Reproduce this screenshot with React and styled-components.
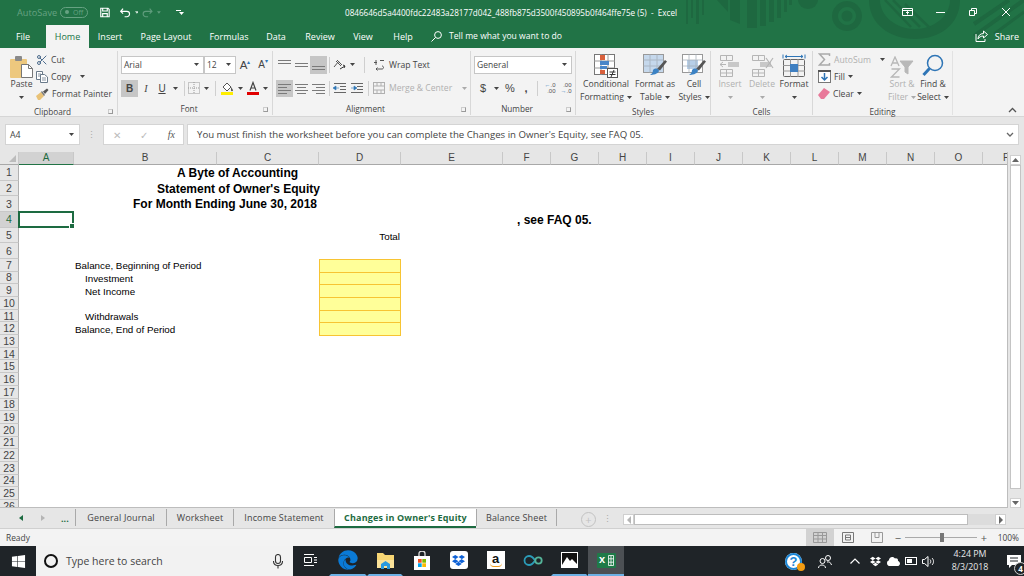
import React from "react";
import styled, { createGlobalStyle } from "styled-components";
import { FaWindows, FaEdge, FaDropbox, FaCloud } from "react-icons/fa";
import { Scissors } from "lucide-react";

const GlobalStyle = createGlobalStyle`
  html, body { margin: 0; padding: 0; background: #fff; }
  body { font-family: "Open Sans", "Noto Sans", sans-serif; }
`;

const GREEN = "#217346";
const COLUMNS = ["A", "B", "C", "D", "E", "F", "G", "H", "I", "J", "K", "L", "M", "N", "O", "P"];
const ROW_COUNT = 26;
const RIBBON_TABS = [
  ["Insert", 42],
  ["Page Layout", 70],
  ["Formulas", 56],
  ["Data", 38],
  ["Review", 50],
  ["View", 36],
  ["Help", 44],
];
const SHEETS = [
  ["General Journal", 91],
  ["Worksheet", 67],
  ["Income Statement", 101],
  ["Changes in Owner's Equity", 142, true],
  ["Balance Sheet", 81],
];

/* ---------- small drawn icons ---------- */

const Caret = ({ color = "#444" }) => (
  <svg width="5" height="3" viewBox="0 0 5 3"><path d="M0 0h5L2.500 3z" fill={color} /></svg>
);

const Lines = ({ kind }) => {
  const rows = {
    top: [[1, 3, 13], [1, 6, 13]],
    middle: [[1, 6, 13], [1, 9, 13]],
    bottom: [[1, 9, 13], [1, 12, 13]],
    left: [[1, 3, 13], [1, 6, 9], [1, 9, 13], [1, 12, 9]],
    center: [[1, 3, 13], [3, 6, 9], [1, 9, 13], [3, 12, 9]],
    right: [[1, 3, 13], [5, 6, 9], [1, 9, 13], [5, 12, 9]],
  }[kind];
  return (
    <svg width="15" height="15" viewBox="0 0 15 15">
      {rows.map(([x, y, w]) => <rect key={y} x={x} y={y} width={w} height="1" fill="#7a7a7a" />)}
    </svg>
  );
};

const Indent = ({ flip }) => (
  <svg width="14" height="12" viewBox="0 0 14 12">
    <g fill="#666">
      <rect x="1" y="1" width="12" height="1" />
      <rect x="7" y="4" width="6" height="1" />
      <rect x="7" y="7" width="6" height="1" />
      <rect x="1" y="10" width="12" height="1" />
    </g>
    <path d={flip ? "M1 6h3V4l3 2-3 2V6" : "M6 6H3V4L0 6l3 2V6"} fill="#2e75b6" stroke="#2e75b6" strokeWidth=".6" />
  </svg>
);

const PasteIcon = () => (
  <svg width="23" height="22" viewBox="0 0 23 22">
    <rect x="0" y="3" width="17" height="19" rx="1" fill="#edc87e" />
    <rect x="5" y="0" width="7" height="5" rx="1" fill="#8a8a8a" />
    <path d="M11.500 8.500h7l4 4v9h-11z" fill="#fff" stroke="#777" />
    <path d="M18.500 8.500v4h4" fill="none" stroke="#777" />
  </svg>
);

const CopyIcon = () => (
  <svg width="12" height="12" viewBox="0 0 12 12" fill="#fff" stroke="#6a7a8a">
    <path d="M.5.5h6v8h-6z" />
    <path d="M4.500 3.500h4l3 2.500v5.500h-7z" />
    <path d="M2 3h3M2 5h2M6 7h4M6 9h4" strokeWidth=".8" />
  </svg>
);

const BrushIcon = () => (
  <svg width="13" height="12" viewBox="0 0 13 12">
    <path d="M0 8l5-4 3 4-4 4H2z" fill="#e9c277" />
    <path d="M5 4l3 4 1-1-3-4z" fill="#777" />
    <path d="M7 3.500l4-3 1.500 1.500-3.500 4z" fill="#555" />
  </svg>
);

const BorderIcon = () => (
  <svg width="12" height="12" viewBox="0 0 12 12" fill="none" stroke="#999" strokeDasharray="1 1">
    <rect x=".5" y=".5" width="11" height="11" />
    <path d="M6 0v12M0 6h12" />
  </svg>
);

const FillIcon = () => (
  <svg width="13" height="14" viewBox="0 0 13 14">
    <path d="M2 6l4-4 4 4-4 4z" fill="#fff" stroke="#555" />
    <path d="M10 6c1 1.500 2 2.500 2 3.300a1 1 0 0 1-2 0z" fill="#555" />
    <rect x="0" y="11" width="12" height="3" fill="#ffee00" />
  </svg>
);

const FontColorIcon = () => (
  <svg width="13" height="14" viewBox="0 0 13 14">
    <rect x="0" y="11" width="12" height="3" fill="#e00000" />
    <path d="M3 9.500L6 1.500l3 8M4 7h4" fill="none" stroke="#444" strokeWidth="1.200" />
  </svg>
);

const OrientIcon = () => (
  <svg width="13" height="12" viewBox="0 0 13 12" fill="none" stroke="#555">
    <path d="M1 8l5-6M3 2l5 5M4 1l5 5" />
    <path d="M7 10l5-3M10 6l2 1-1 2" stroke="#333" />
  </svg>
);

const WrapIcon = () => (
  <svg width="12" height="12" viewBox="0 0 12 12" fill="none" stroke="#555">
    <path d="M3 1v5M1 3.500h3M7 1.500h4M9 7c2 0 2 3 0 3H3M4.500 8.500L3 10l1.500 1.500" />
  </svg>
);

const MergeIcon = () => (
  <svg width="12" height="12" viewBox="0 0 12 12" fill="none" stroke="#b0b0b0">
    <rect x=".5" y=".5" width="11" height="11" />
    <path d="M0 4h12M0 8h12M4 0v4M8 0v4M4 8v4M8 8v4" />
  </svg>
);

const CondFormatIcon = () => (
  <svg width="24" height="24" viewBox="0 0 24 24">
    <rect x=".5" y=".5" width="20" height="20" fill="#fff" stroke="#777" />
    <path d="M7 0v21M14 0v21M0 7h21M0 14h21" stroke="#999" />
    <rect x="6" y="1" width="5" height="5" fill="#d9603c" />
    <rect x="6" y="7" width="9" height="4" fill="#4a86c8" />
    <rect x="6" y="12" width="7" height="3" fill="#4a86c8" />
    <rect x="6" y="16" width="5" height="4" fill="#d9603c" />
    <rect x="13.500" y="14.500" width="10" height="9" fill="#fff" stroke="#555" />
    <path d="M15.500 18h6M15.500 20.500h6M20 16l-3 7" stroke="#333" fill="none" />
  </svg>
);

const TableStyleIcon = ({ cell }) => (
  <svg width="24" height="24" viewBox="0 0 24 24">
    <rect x=".5" y=".5" width="20" height="18" fill="#fff" stroke="#999" />
    {cell ? (
      <rect x="5" y="6" width="11" height="9" fill="#b7cfe8" />
    ) : (
      <rect x="1" y="1" width="19" height="17" fill="#c5d8ec" />
    )}
    <path d="M7 0v19M14 0v19M0 6h21M0 12h21" stroke="#a0aab4" opacity=".7" />
    <path d="M14 15l8-9 2 1.500-7 9z" fill="#555" />
    <path d="M10 16c3-3 6-1 6 1-1 3-6 4-9 4 2-1 3-3 3-5z" fill="#3b82c4" />
  </svg>
);

const CellsIcon = ({ kind }) => {
  const stroke = kind === "format" ? "#666" : "#b5b5b5";
  return (
    <svg width="24" height="24" viewBox="0 0 24 24" fill="none">
      {kind === "format" ? (
        <>
          <rect x="1.500" y="5.500" width="21" height="17" rx="1" stroke={stroke} />
          <path d="M8.500 5v18M16 5v18M1 11.500h22M1 17h22" stroke="#999" />
          <rect x="8" y="10" width="8" height="8" fill="#3f7fc1" />
          <path d="M1 .5v4M23 .5v4M3 2.500h18M3 2.500l2-1.500M3 2.500l2 1.500M21 2.500l-2-1.500M21 2.500l-2 1.500" stroke="#2e75b6" />
        </>
      ) : (
        <>
          <path d="M2.500 1.500h12v5h-12zM2.500 15.500h12v7h-12zM8.500 1.500v5M8.500 15.500v7M2.500 19h12" stroke={stroke} />
          <rect x="10" y="8" width="11" height="5" fill="#c8c8c8" />
          {kind === "insert" ? (
            <path d="M8 10.500H2M5 8l-3 2.500L5 13" stroke={stroke} />
          ) : (
            <path d="M16 4l7 10M23 4l-7 10" stroke={stroke} strokeWidth="1.200" />
          )}
        </>
      )}
    </svg>
  );
};

const SumIcon = () => (
  <svg width="13" height="13" viewBox="0 0 13 13"><path d="M11.500 3V1H1.500l5 5.500-5 5.500h10v-2" fill="none" stroke="#aaa" strokeWidth="1.500" /></svg>
);

const FillDownIcon = () => (
  <svg width="13" height="13" viewBox="0 0 13 13">
    <rect x=".5" y=".5" width="12" height="12" fill="#fff" stroke="#777" />
    <rect x="0" y="0" width="13" height="2" fill="#555" />
    <path d="M6.500 3v7M3.500 7l3 3 3-3" fill="none" stroke="#2e75b6" strokeWidth="1.500" />
  </svg>
);

const EraserIcon = () => (
  <svg width="12" height="11" viewBox="0 0 12 11"><path d="M0 7l6-7 6 4-6 7H3z" fill="#e8799a" /></svg>
);

const SortIcon = () => (
  <svg width="24" height="22" viewBox="0 0 24 22" fill="none" stroke="#b8b8b8">
    <path d="M1 10L5 1l4 9M2.500 7h5M1.500 13h8l-8 8h8" strokeWidth="1.300" />
    <path d="M10 5h13l-5 6v7l-3-2v-5z" fill="#b8b8b8" />
  </svg>
);

const FindIcon = () => (
  <svg width="22" height="24" viewBox="0 0 22 24" fill="none" stroke="#2e75b6">
    <circle cx="13" cy="9" r="7.500" strokeWidth="1.500" />
    <path d="M7.500 14.500L1.500 21" strokeWidth="3" />
  </svg>
);

const WindowIcon = ({ kind }) => (
  <svg width="12" height="12" viewBox="0 0 12 12" fill="none" stroke="#fff">
    {kind === "min" && <path d="M1 6.500h9" />}
    {kind === "restore" && <path d="M2.500 4.500h5v5h-5zM4.500 4V2.500h5v5H8" />}
    {kind === "close" && <path d="M2 2l8 8M10 2l-8 8" />}
    {kind === "ribbon" && <path d="M.5 2.500h10v7H.5zM.5 4.500h10M5.500 8.500V5.500M4 7l1.500-1.500L7 7" />}
  </svg>
);

const TitlePattern = () => (
  <PatternSvg viewBox="0 0 1024 48" fill="none">
    <g fill="#1e6840">
      <path d="M686 0h2v24h-2zM691 0h2v18h-2zM696 0h3v24h-3zM702 0h2v15h-2z" />
      <path d="M717 0h11v12z" />
      <path d="M730 0h10v24l-10-4zM747 0h10v28h-10zM760 0h6v26h-6zM769 0h5v22h-5zM777 0h4v18h-4zM784 0h3v12h-3zM789 0h3v5h-3z" />
      <path d="M798 0h20a10 9 0 0 1-20 0z" />
      <path fillRule="evenodd" d="M847 1a15 15 0 1 0 .01 0zM847 7a9 9 0 1 1-.01 0z" />
      <circle cx="847" cy="16" r="5.500" />
      <path fillRule="evenodd" d="M869 0c0 24 21 39 46 39s45-15 45-39h-10c0 16-16 29-35 29s-35-13-35-29z" />
    </g>
    <g stroke="#1e6840" strokeWidth="2.500">
      <path d="M885 0l26 27M893 0l27 27M905 4l25 24" />
      <path d="M1024 0l-50 36M1009 0l-35 24" strokeWidth="4" />
      <path d="M1024 12l-30 22" strokeWidth="3" />
    </g>
  </PatternSvg>
);

/* ---------- app ---------- */

function SmallTool({ w, on, children }) {
  return <Tool $w={w} $on={on}>{children}</Tool>;
}

function Large({ w, icon, lines, dim, caret }) {
  return (
    <LargeButton $w={w} $dim={dim}>
      <LargeIcon>{icon}</LargeIcon>
      <span>{lines[0]}</span>
      <span>
        {lines[1]} {caret && <Caret color={dim ? "#aaa" : "#444"} />}
      </span>
    </LargeButton>
  );
}

function App() {
  const rows = Array.from({ length: ROW_COUNT }, (_, i) => i + 1);
  return (
    <Page>
      <GlobalStyle />
      <Header>
        <TitlePattern />
        <TitleBar>
          <AutoSave>AutoSave</AutoSave>
          <Toggle><i /> Off</Toggle>
          <QuickAccess>
            <svg width="13" height="13" viewBox="0 0 13 13" fill="none" stroke="#fff" strokeWidth="1.500">
              <path d="M1 1h9.500L12 2.500V12H1zM3.500 1v3.500h6V1M3.500 12V8h6v4" />
            </svg>
            <svg width="14" height="13" viewBox="0 0 14 13" fill="none" stroke="#fff" strokeWidth="1.500">
              <path d="M1 5h8a3.500 3.500 0 0 1 0 7H6M4 1.500L1 5l3 3" />
            </svg>
            <Caret color="#cfe3d8" />
            <svg width="14" height="13" viewBox="0 0 14 13" fill="none" stroke="#5f9c7c" strokeWidth="1.500">
              <path d="M13 5H5a3.500 3.500 0 0 0 0 7h3M10 1.500L13 5l-3 3" />
            </svg>
            <Caret color="#5f9c7c" />
            <QatMore><b />
              <Caret color="#fff" />
            </QatMore>
          </QuickAccess>
          <FileTitle>0846646d5a4400fdc22483a28177d042_488fb875d3500f450895b0f464ffe75e (5)&nbsp; -&nbsp; Excel</FileTitle>
          <WindowControls>
            <WindowIcon kind="ribbon" />
            <WindowIcon kind="min" />
            <WindowIcon kind="restore" />
            <WindowIcon kind="close" />
          </WindowControls>
        </TitleBar>
        <TabBar>
          <RibbonTab $w={46}>File</RibbonTab>
          <HomeTab>Home</HomeTab>
          {RIBBON_TABS.map(([name, w]) => <RibbonTab key={name} $w={w}>{name}</RibbonTab>)}
          <TellMe>
            <svg width="11" height="11" viewBox="0 0 11 11" fill="none" stroke="#fff">
              <circle cx="7" cy="4" r="3.400" />
              <path d="M4.500 6.500L.5 10.500" />
            </svg>
            Tell me what you want to do
          </TellMe>
          <Share>
            <svg width="13" height="12" viewBox="0 0 13 12" fill="none" stroke="#fff">
              <path d="M8.500 1l4 3.500-4 3.500V6C6 6 4 7 3 9c0-3 2-5.500 5.500-5.500zM1 4v7.500h9V9" />
            </svg>
            Share
          </Share>
        </TabBar>
      </Header>

      <Ribbon>
        <Group $w={118}>
          <GroupBody $pad={8}>
            <ClipRow>
              <LargeButton $w={27}>
                <LargeIcon><PasteIcon /></LargeIcon>
                <span>Paste</span>
                <span><Caret /></span>
              </LargeButton>
              <SmallList $left={1}>
                <SmallItem><Scissors size={12} color="#4b6b8c" />Cut</SmallItem>
                <SmallItem><CopyIcon />Copy <CaretGap><Caret /></CaretGap></SmallItem>
                <SmallItem><BrushIcon />Format Painter</SmallItem>
              </SmallList>
            </ClipRow>
          </GroupBody>
          <GroupLabel $launcher>Clipboard<Launcher /></GroupLabel>
        </Group>

        <Group $w={155}>
          <GroupBody $pad={3}>
            <ToolRows>
              <ToolRow>
                <SelectBox $w={83}>Arial<Caret /></SelectBox>
                <SelectBox $w={32}>12<Caret /></SelectBox>
                <SmallTool w={18}><GrowA>A<sup>▴</sup></GrowA></SmallTool>
                <SmallTool w={18}><GrowA $small>A<sup>▾</sup></GrowA></SmallTool>
              </ToolRow>
              <ToolRow>
                <SmallTool w={17} on><b>B</b></SmallTool>
                <SmallTool w={16}><em>I</em></SmallTool>
                <SmallTool w={16}><u>U</u></SmallTool>
                <SmallTool w={10}><Caret /></SmallTool>
                <Divider $w={7} />
                <SmallTool w={14}><BorderIcon /></SmallTool>
                <SmallTool w={10}><Caret /></SmallTool>
                <Divider $w={8} />
                <SmallTool w={16}><FillIcon /></SmallTool>
                <SmallTool w={10}><Caret /></SmallTool>
                <SmallTool w={16}><FontColorIcon /></SmallTool>
                <SmallTool w={9}><Caret /></SmallTool>
              </ToolRow>
            </ToolRows>
          </GroupBody>
          <GroupLabel $launcher>Font<Launcher /></GroupLabel>
        </Group>

        <Group $w={198}>
          <GroupBody $pad={3}>
            <ToolRows>
              <ToolRow>
                <SmallTool w={17}><Lines kind="top" /></SmallTool>
                <SmallTool w={17}><Lines kind="middle" /></SmallTool>
                <SmallTool w={17} on><Lines kind="bottom" /></SmallTool>
                <Divider $w={4} />
                <SmallTool w={17}><OrientIcon /></SmallTool>
                <SmallTool w={9}><Caret /></SmallTool>
                <Divider $w={14} />
                <ActionText><WrapIcon />Wrap Text</ActionText>
              </ToolRow>
              <ToolRow>
                <SmallTool w={17} on><Lines kind="left" /></SmallTool>
                <SmallTool w={17}><Lines kind="center" /></SmallTool>
                <SmallTool w={17}><Lines kind="right" /></SmallTool>
                <Divider $w={4} />
                <SmallTool w={17}><Indent /></SmallTool>
                <SmallTool w={17}><Indent flip /></SmallTool>
                <Divider $w={6} />
                <ActionText $dim><MergeIcon />Merge &amp; Center <CaretGap><Caret color="#aaa" /></CaretGap></ActionText>
              </ToolRow>
            </ToolRows>
          </GroupBody>
          <GroupLabel $launcher>Alignment<Launcher /></GroupLabel>
        </Group>

        <Group $w={105}>
          <GroupBody $pad={3}>
            <ToolRows>
              <ToolRow>
                <SelectBox $w={98}>General<Caret /></SelectBox>
              </ToolRow>
              <ToolRow>
                <SmallTool w={18}><PlainSign>$</PlainSign></SmallTool>
                <SmallTool w={8}><Caret /></SmallTool>
                <SmallTool w={20}><PlainSign>%</PlainSign></SmallTool>
                <SmallTool w={12}><PlainSign><b>,</b></PlainSign></SmallTool>
                <Divider $w={10} />
                <SmallTool w={16}><DecimalMark><i>←</i>.0<br />.00</DecimalMark></SmallTool>
                <SmallTool w={16}><DecimalMark>.00<br /><i>→</i>.0</DecimalMark></SmallTool>
              </ToolRow>
            </ToolRows>
          </GroupBody>
          <GroupLabel $launcher>Number<Launcher /></GroupLabel>
        </Group>

        <Group $w={135}>
          <GroupBody $pad={4}>
            <Large w={52} icon={<CondFormatIcon />} lines={["Conditional", "Formatting"]} caret />
            <Large w={46} icon={<TableStyleIcon />} lines={["Format as", "Table"]} caret />
            <Large w={32} icon={<TableStyleIcon cell />} lines={["Cell", "Styles"]} caret />
          </GroupBody>
          <GroupLabel>Styles</GroupLabel>
        </Group>

        <Group $w={102}>
          <GroupBody $pad={3}>
            <Large w={32} icon={<CellsIcon kind="insert" />} lines={["Insert", ""]} dim caret />
            <Large w={32} icon={<CellsIcon kind="delete" />} lines={["Delete", ""]} dim caret />
            <Large w={32} icon={<CellsIcon kind="format" />} lines={["Format", ""]} caret />
          </GroupBody>
          <GroupLabel>Cells</GroupLabel>
        </Group>

        <Group $w={140} $last>
          <GroupBody $pad={5}>
            <SmallList $w={69}>
              <SmallItem $dim><SumIcon />AutoSum <CaretGap><Caret /></CaretGap></SmallItem>
              <SmallItem><FillDownIcon />Fill <Caret /></SmallItem>
              <SmallItem><EraserIcon />Clear <Caret /></SmallItem>
            </SmallList>
            <Large w={30} icon={<SortIcon />} lines={["Sort &", "Filter"]} dim caret />
            <Large w={32} icon={<FindIcon />} lines={["Find &", "Select"]} caret />
          </GroupBody>
          <GroupLabel>Editing</GroupLabel>
        </Group>

        <Collapse>
          <svg width="9" height="6" viewBox="0 0 9 6" fill="none" stroke="#555" strokeWidth="1.300">
            <path d="M1 5l3.500-3.500L8 5" />
          </svg>
        </Collapse>
      </Ribbon>

      <FormulaBar>
        <NameBox>A4<Caret /></NameBox>
        <Grip>⋮</Grip>
        <FxBox>
          <span>✕</span>
          <span>✓</span>
          <FxMark>fx</FxMark>
        </FxBox>
        <FormulaInput>
          You must finish the worksheet before you can complete the Changes in Owner's Equity, see FAQ 05.
          <svg width="8" height="5" viewBox="0 0 8 5" fill="none" stroke="#666" strokeWidth="1.300">
            <path d="M1 1l3 3 3-3" />
          </svg>
        </FormulaInput>
      </FormulaBar>

      <SheetArea>
        <Sheet>
          <Corner />
          {COLUMNS.map((c, i) => (
            <ColHead key={c} $c={i + 2} $on={c === "A"} $clip={c === "P"}>{c}</ColHead>
          ))}
          {rows.map((r) => <RowHead key={r} $r={r + 1} $on={r === 4}>{r}</RowHead>)}

          <Label $r={1} $c={3} $bold $left={103}>A Byte of Accounting</Label>
          <Label $r={2} $c={3} $bold $left={83}>Statement of Owner's Equity</Label>
          <Label $r={3} $c={3} $bold $left={59}>For Month Ending June 30, 2018</Label>
          <Selected $r={4} $c={2} />
          <Label $r={4} $c={7} $bold $left={14}>, see FAQ 05.</Label>
          <Label $r={5} $c={5} $small $right>Total</Label>
          <Label $r={7} $c={3} $small $left={1}>Balance, Beginning of Period</Label>
          <Label $r={8} $c={3} $small $left={11}>Investment</Label>
          <Label $r={9} $c={3} $small $left={11}>Net Income</Label>
          <Label $r={11} $c={3} $small $left={11}>Withdrawals</Label>
          <Label $r={12} $c={3} $small $left={1}>Balance, End of Period</Label>
          {[7, 8, 9, 10, 11, 12].map((r) => <InputCell key={r} $r={r} $c={5} />)}
        </Sheet>
        <VScroll>
          <ScrollButton><svg width="7" height="4" viewBox="0 0 7 4"><path d="M0 4h7L3.500 0z" fill="#666" /></svg></ScrollButton>
          <VThumb />
          <ScrollButton><svg width="7" height="4" viewBox="0 0 7 4"><path d="M0 0h7L3.500 4z" fill="#666" /></svg></ScrollButton>
        </VScroll>
      </SheetArea>

      <SheetTabs>
        <TabNav>
          <NavArrow $left $on />
          <NavArrow />
          <Ellipsis>...</Ellipsis>
        </TabNav>
        {SHEETS.map(([name, w, active]) => (
          <SheetTab key={name} $w={w} $active={active}>{name}</SheetTab>
        ))}
        <AddSheet>+</AddSheet>
        <Grip>⋮</Grip>
        <HScroll>
          <HButton><NavArrow $left $small /></HButton>
          <HThumb />
          <HRest />
          <HButton><NavArrow $small $on /></HButton>
        </HScroll>
      </SheetTabs>

      <StatusBar>
        <span>Ready</span>
        <ViewButtons>
          <ViewButton $on>
            <svg width="14" height="11" viewBox="0 0 14 11" fill="none" stroke="#999"><path d="M.5.5h13v10H.5zM.5 3.500h13M.5 7h13M5 0v11M9.500 0v11" /></svg>
          </ViewButton>
          <ViewButton>
            <svg width="12" height="11" viewBox="0 0 12 11" fill="none" stroke="#777"><path d="M.5.5h11v10H.5zM3.500 3h5v5h-5zM3.500 5.500h5" /></svg>
          </ViewButton>
          <ViewButton>
            <svg width="12" height="11" viewBox="0 0 12 11" fill="none" stroke="#999"><path d="M.5.5h11v10H.5zM4 .5v5h4v-5" /></svg>
          </ViewButton>
        </ViewButtons>
        <ZoomSign>−</ZoomSign>
        <ZoomTrack><i /></ZoomTrack>
        <ZoomSign>+</ZoomSign>
        <ZoomValue>100%</ZoomValue>
      </StatusBar>

      <Taskbar>
        <StartButton><FaWindows size={15} color="#fff" /></StartButton>
        <SearchBox>
          <Cortana />
          <SearchText>Type here to search</SearchText>
          <svg width="10" height="15" viewBox="0 0 10 15" fill="none" stroke="#333" strokeWidth="1.100">
            <rect x="2.500" y=".5" width="5" height="9" rx="2.500" />
            <path d="M.5 7c0 6 9 6 9 0M5 11.500v3" />
          </svg>
        </SearchBox>
        <TaskApp $w={36}>
          <svg width="14" height="14" viewBox="0 0 14 14" fill="none" stroke="#fff">
            <path d="M0 1.500h10M0 12.500h10M.5 4.500h7v5h-7zM10 4.500h3M10 7h3M10 9.500h3" />
          </svg>
        </TaskApp>
        <TaskApp $w={38} $open><FaEdge size={20} color="#0a7ad6" /></TaskApp>
        <TaskApp $w={36} $open>
          <svg width="19" height="17" viewBox="0 0 19 17">
            <path d="M1 1h6l2 2h9v13H1z" fill="#f7d674" />
            <rect x="1" y="8" width="17" height="8" fill="#fbe39a" />
            <path d="M5 17v-5l4.500-3 4.500 3v5h-3v-3H8v3z" fill="#2b9be0" />
          </svg>
        </TaskApp>
        <TaskApp $w={37}>
          <svg width="18" height="19" viewBox="0 0 18 19">
            <path d="M1 5h16v14H1z" fill="#fff" />
            <path d="M6 5V2.500a3 2.500 0 0 1 6 0V5" fill="none" stroke="#ddd" strokeWidth="1.300" />
            <rect x="5" y="8" width="3.700" height="3.700" fill="#f25022" />
            <rect x="9.300" y="8" width="3.700" height="3.700" fill="#7fba00" />
            <rect x="5" y="12.300" width="3.700" height="3.700" fill="#00a4ef" />
            <rect x="9.300" y="12.300" width="3.700" height="3.700" fill="#ffb900" />
          </svg>
        </TaskApp>
        <TaskApp $w={37}>
          <WhiteTile $round><FaDropbox size={13} color="#0f62d6" /></WhiteTile>
        </TaskApp>
        <TaskApp $w={37}>
          <WhiteTile><AmazonA>a</AmazonA><AmazonSmile /></WhiteTile>
        </TaskApp>
        <TaskApp $w={37}>
          <svg width="20" height="11" viewBox="0 0 20 11" fill="none" strokeWidth="1.800">
            <path d="M12 5.500C10 2 8.500 1 6 1a4.500 4.500 0 0 0 0 9c2.500 0 4-1 6-4.500" stroke="#2b9cb8" />
            <circle cx="15.500" cy="5.500" r="3.200" stroke="#55b59a" />
          </svg>
        </TaskApp>
        <TaskApp $w={37} $open>
          <svg width="17" height="16" viewBox="0 0 17 16">
            <rect width="17" height="16" fill="#fff" />
            <rect x="1" y="1" width="15" height="12" fill="#111" />
            <path d="M1 13l5-8 3 4 2-2 5 5v1H1z" fill="#fff" />
          </svg>
        </TaskApp>
        <ExcelApp>
          <svg width="19" height="15" viewBox="0 0 19 15">
            <rect width="19" height="15" rx="1" fill="#1f7a48" />
            <path d="M11.500 2.500h5v10h-5zM14 2.500v10M11.500 5.800h5M11.500 9.200h5" fill="none" stroke="#fff" strokeWidth=".8" />
          </svg>
          <ExcelX>x</ExcelX>
        </ExcelApp>
        <Tray>
          <HelpBadge>?<i /></HelpBadge>
          <PeopleBtn>
            <svg width="14" height="13" viewBox="0 0 14 13" fill="none" stroke="#fff">
              <circle cx="4.500" cy="6" r="2.500" />
              <path d="M.5 13c0-4 7-4 7 0" />
              <circle cx="10" cy="3" r="2.500" />
              <path d="M9 7c2-.5 4 .5 4.500 3" />
            </svg>
          </PeopleBtn>
          <TrayIcon $w={22}>
            <svg width="10" height="6" viewBox="0 0 10 6" fill="none" stroke="#fff" strokeWidth="1.200"><path d="M.5 5.500L5 1l4.500 4.500" /></svg>
          </TrayIcon>
          <TrayIcon $w={18}><FaDropbox size={11} color="#fff" /></TrayIcon>
          <TrayIcon $w={18}><FaCloud size={13} color="#fff" /></TrayIcon>
          <TrayIcon $w={18}>
            <svg width="12" height="8" viewBox="0 0 12 8" fill="none" stroke="#fff"><rect x=".5" y=".5" width="11" height="7" /><rect x="2" y="2" width="5" height="4" fill="#fff" stroke="none" /></svg>
          </TrayIcon>
          <TrayIcon $w={17}>
            <svg width="13" height="11" viewBox="0 0 13 11" fill="none" stroke="#fff">
              <path d="M.5 3.500h2L6 .5v10l-3.500-3h-2zM8 3.500c1 1 1 3 0 4M10 2c2 2 2 5 0 7" />
            </svg>
          </TrayIcon>
          <Clock>
            <span>4:24 PM</span>
            <span>8/3/2018</span>
          </Clock>
          <Notify>
            <svg width="14" height="13" viewBox="0 0 14 13">
              <path d="M0 0h14v10H5l-3 3v-3H0z" fill="#fff" />
              <path d="M3 3h8M3 6h8" stroke="#1f2428" />
            </svg>
            <NotifyCount>4</NotifyCount>
          </Notify>
        </Tray>
      </Taskbar>
    </Page>
  );
}

export default App;

/* ---------- page frame ---------- */

const Page = styled.div`
  width: 1024px;
  height: 576px;
  overflow: hidden;
  display: flex;
  flex-direction: column;
  background: #e6e6e6;
  color: #444;
`;

const Header = styled.header`
  position: relative;
  height: 48px;
  background: ${GREEN};
  color: #fff;
`;

const PatternSvg = styled.svg`
  position: absolute;
  inset: 0;
  width: 1024px;
  height: 48px;
`;

const TitleBar = styled.div`
  position: relative;
  height: 24px;
  display: flex;
  align-items: center;
  padding-left: 17px;
  font-size: 9px;
`;

const AutoSave = styled.span`
  color: #66a282;
  width: 43px;
  font-size: 9.200px;
`;

const Toggle = styled.span`
  width: 28px;
  height: 11px;
  box-sizing: border-box;
  border: 1px solid #66a282;
  border-radius: 6px;
  color: #66a282;
  font-size: 7px;
  line-height: 9px;
  padding-left: 4px;
  display: flex;
  align-items: center;
  gap: 4px;

  i {
    width: 4px;
    height: 4px;
    border-radius: 50%;
    background: #66a282;
  }
`;

const QuickAccess = styled.div`
  display: flex;
  align-items: center;
  gap: 4px;
  margin-left: 12px;
  width: 84px;

  svg:nth-child(2) { margin-left: 6px; }
`;

const QatMore = styled.span`
  display: flex;
  flex-direction: column;
  align-items: center;
  gap: 1px;
  margin-left: 8px;

  b {
    width: 5px;
    height: 1px;
    background: #fff;
  }
`;

const FileTitle = styled.div`
  margin-left: 161px;
  width: 336px;
  white-space: nowrap;
  font-size: 8.150px;
`;

const WindowControls = styled.div`
  margin-left: auto;
  width: 122px;
  padding-right: 12px;
  display: flex;
  justify-content: space-between;
  box-sizing: border-box;
`;

const TabBar = styled.nav`
  position: relative;
  height: 24px;
  display: flex;
  align-items: stretch;
  font-size: 9px;
`;

const RibbonTab = styled.div`
  width: ${(p) => p.$w}px;
  display: flex;
  align-items: center;
  justify-content: center;
`;

const HomeTab = styled(RibbonTab)`
  width: 43px;
  margin-top: 1px;
  background: #f3f3f3;
  color: ${GREEN};
`;

const TellMe = styled.div`
  display: flex;
  align-items: center;
  gap: 7px;
  margin-left: 6px;
  font-size: 8.600px;
`;

const Share = styled.div`
  margin-left: auto;
  padding-right: 5px;
  display: flex;
  align-items: center;
  gap: 7px;
`;

/* ---------- ribbon ---------- */

const Ribbon = styled.section`
  position: relative;
  height: 69px;
  background: #f3f3f3;
  display: flex;
  padding-top: 3px;
  box-sizing: border-box;
  border-bottom: 1px solid #d6d6d6;
  font-size: 8.600px;
`;

const Group = styled.div`
  width: ${(p) => p.$w}px;
  box-sizing: border-box;
  border-right: 1px solid ${(p) => (p.$last ? "#e2e2e2" : "#d8d8d8")};
  display: flex;
  flex-direction: column;
  height: 64px;
`;

const GroupBody = styled.div`
  height: 54px;
  display: flex;
  padding-left: ${(p) => p.$pad}px;
`;

const GroupLabel = styled.div`
  position: relative;
  flex: 1;
  text-align: center;
  font-size: 8.200px;
  line-height: 12px;
  padding-top: 1.500px;
  white-space: nowrap;
  padding-right: ${(p) => (p.$launcher ? 12 : 0)}px;
`;

const Launcher = styled.i`
  position: absolute;
  right: 4px;
  top: 5px;
  width: 3px;
  height: 3px;
  border: 1px solid #999;
  border-left-color: #ccc;
  border-top-color: #ccc;
`;

const ClipRow = styled.div`
  display: flex;
`;

const SmallList = styled.div`
  display: flex;
  flex-direction: column;
  margin-left: ${(p) => p.$left || 0}px;
  width: ${(p) => (p.$w ? `${p.$w}px` : "auto")};
`;

const SmallItem = styled.div`
  height: 17px;
  display: flex;
  align-items: center;
  gap: 3px;
  white-space: nowrap;
  color: ${(p) => (p.$dim ? "#b0b0b0" : "#444")};
`;

const CaretGap = styled.span`
  margin-left: 6px;
  display: inline-flex;
  align-items: center;
`;

const ToolRows = styled.div`
  display: flex;
  flex-direction: column;
  gap: 6px;
  padding-top: 5px;
`;

const ToolRow = styled.div`
  height: 17.500px;
  display: flex;
  align-items: stretch;
`;

const Tool = styled.div`
  width: ${(p) => p.$w}px;
  flex: none;
  display: flex;
  align-items: center;
  justify-content: center;
  background: ${(p) => (p.$on ? "#c6c6c6" : "transparent")};
  font-family: "Liberation Serif", serif;
  font-size: 10px;
  color: #444;

  b, u { font-family: "Liberation Sans", sans-serif; }
`;

const Divider = styled.div`
  width: ${(p) => p.$w}px;
  flex: none;
  position: relative;

  &::after {
    content: "";
    position: absolute;
    left: 50%;
    top: 1px;
    bottom: 1px;
    width: 1px;
    background: #cfcfcf;
  }
`;

const SelectBox = styled.div`
  width: ${(p) => p.$w}px;
  box-sizing: border-box;
  flex: none;
  background: #fff;
  border: 1px solid #c6c6c6;
  display: flex;
  align-items: center;
  justify-content: space-between;
  padding: 0 4px 0 2px;
  font-size: 8.500px;
`;

const GrowA = styled.span`
  font-family: "Liberation Sans", sans-serif;
  font-size: ${(p) => (p.$small ? 10 : 11.5)}px;

  sup {
    font-size: 6px;
    color: #2e75b6;
    vertical-align: 5px;
    line-height: 0;
  }
`;

const ActionText = styled.div`
  display: flex;
  align-items: center;
  gap: 4px;
  margin-left: 2px;
  white-space: nowrap;
  color: ${(p) => (p.$dim ? "#b0b0b0" : "#444")};
`;

const PlainSign = styled.span`
  font-family: "Liberation Sans", sans-serif;
  font-size: 11px;
  color: #444;
`;

const DecimalMark = styled.span`
  font-family: "Liberation Sans", sans-serif;
  font-size: 6px;
  line-height: 6.500px;
  text-align: right;
  color: #555;

  i {
    color: #2e75b6;
    font-style: normal;
  }
`;

const LargeButton = styled.div`
  width: ${(p) => p.$w}px;
  flex: none;
  display: flex;
  flex-direction: column;
  align-items: center;
  line-height: 13px;
  white-space: nowrap;
  color: ${(p) => (p.$dim ? "#b0b0b0" : "#444")};

  span {
    height: 13px;
    display: flex;
    align-items: center;
    gap: 3px;
  }
`;

const LargeIcon = styled.div`
  height: 27px;
  display: flex;
  align-items: flex-end;
`;

const Collapse = styled.div`
  position: absolute;
  right: 7px;
  bottom: 3px;
  display: flex;
`;

/* ---------- formula bar ---------- */

const FormulaBar = styled.div`
  height: 35px;
  box-sizing: border-box;
  padding: 7px 5px 7px 5px;
  display: flex;
  align-items: stretch;
  background: #e6e6e6;
`;

const whiteField = `
  background: #fff;
  border: 1px solid #d4d4d4;
  box-sizing: border-box;
  display: flex;
  align-items: center;
`;

const NameBox = styled.div`
  ${whiteField}
  width: 75px;
  justify-content: space-between;
  padding: 0 5px 0 4px;
  font-size: 8.800px;
`;

const Grip = styled.span`
  width: 23px;
  display: flex;
  align-items: center;
  justify-content: center;
  color: #aaa;
  font-size: 9px;
`;

const FxBox = styled.div`
  ${whiteField}
  width: 81px;
  justify-content: space-between;
  padding: 0 8px 0 9px;
  color: #bbb;
  font-size: 10px;
  margin-right: 3px;
`;

const FxMark = styled.span`
  font-family: "Liberation Serif", serif;
  font-style: italic;
  color: #555;
`;

const FormulaInput = styled.div`
  ${whiteField}
  flex: 1;
  padding: 0 4px 0 9px;
  justify-content: space-between;
  font-size: 9.630px;
  white-space: nowrap;
`;

/* ---------- sheet ---------- */

const SheetArea = styled.main`
  height: 356px;
  display: flex;
`;

const Sheet = styled.div`
  width: 1008px;
  height: 356px;
  overflow: hidden;
  background: #fff;
  box-sizing: border-box;
  border-bottom: 1px solid #bdbdbd;
  border-right: 1px solid #bdbdbd;
  display: grid;
  grid-template-columns: 19px 55px 143px 102px 82px 102px repeat(10, 48px) 25px;
  grid-template-rows: 13px repeat(5, 15.700px) 15.500px repeat(19, 12.700px) 12.700px;
  color: #000;
  font-family: "Liberation Sans", sans-serif;
`;

const Corner = styled.div`
  grid-row: 1;
  grid-column: 1;
  background: #e6e6e6;
  border-bottom: 1px solid #a8a8a8;
  border-right: 1px solid #c8c8c8;
  position: relative;

  &::after {
    content: "";
    position: absolute;
    right: 2px;
    bottom: 2px;
    border-left: 7px solid transparent;
    border-bottom: 7px solid #bcbcbc;
  }
`;

const ColHead = styled.div`
  grid-row: 1;
  grid-column: ${(p) => p.$c};
  background: ${(p) => (p.$on ? "#d2d2d2" : "#e6e6e6")};
  border-bottom: 1px solid ${(p) => (p.$on ? GREEN : "#a8a8a8")};
  border-right: 1px solid #c8c8c8;
  box-sizing: border-box;
  overflow: hidden;
  font-size: 10px;
  line-height: 12px;
  color: ${(p) => (p.$on ? "#1d6b41" : "#444")};
  text-align: ${(p) => (p.$clip ? "left" : "center")};
  padding-left: ${(p) => (p.$clip ? 20 : 0)}px;
`;

const RowHead = styled.div`
  grid-row: ${(p) => p.$r};
  grid-column: 1;
  background: ${(p) => (p.$on ? "#d2d2d2" : "#e6e6e6")};
  border-bottom: 1px solid #c8c8c8;
  border-right: 1px solid ${(p) => (p.$on ? GREEN : "#b0b0b0")};
  box-sizing: border-box;
  font-size: 10.500px;
  color: ${(p) => (p.$on ? "#1d6b41" : "#444")};
  display: flex;
  align-items: center;
  justify-content: center;
  overflow: hidden;
`;

const Label = styled.div`
  grid-row: ${(p) => p.$r + 1};
  grid-column: ${(p) => p.$c};
  white-space: nowrap;
  display: flex;
  align-items: center;
  justify-content: ${(p) => (p.$right ? "flex-end" : "flex-start")};
  padding-left: ${(p) => p.$left || 0}px;
  padding-right: ${(p) => (p.$right ? 1 : 0)}px;
  padding-top: ${(p) => (p.$small ? 1 : 0)}px;
  font-size: ${(p) => (p.$small ? 9.8 : 12)}px;
  font-weight: ${(p) => (p.$bold ? 700 : 400)};
  min-width: 0;
  overflow: visible;
`;

const InputCell = styled.div`
  grid-row: ${(p) => p.$r + 1};
  grid-column: ${(p) => p.$c};
  background: #ffff99;
  box-sizing: border-box;
  border: 1px solid #f7c433;
  margin-bottom: -1px;
`;

const Selected = styled.div`
  grid-row: ${(p) => p.$r + 1};
  grid-column: ${(p) => p.$c};
  position: relative;
  box-sizing: border-box;
  margin: -1px 0 0 -1px;
  border: 2px solid #1d6b41;

  &::after {
    content: "";
    position: absolute;
    right: -3px;
    bottom: -3px;
    width: 4px;
    height: 4px;
    background: #1d6b41;
    border: 1px solid #fff;
  }
`;

const VScroll = styled.aside`
  width: 16px;
  box-sizing: border-box;
  padding: 3px 3px 0 2px;
  display: flex;
  flex-direction: column;
`;

const ScrollButton = styled.div`
  height: 10px;
  flex: none;
  background: #fff;
  border: 1px solid #d0d0d0;
  box-sizing: border-box;
  display: flex;
  align-items: center;
  justify-content: center;
`;

const VThumb = styled.div`
  flex: 1;
  margin-bottom: 9px;
  background: #fff;
  border: 1px solid #c4c4c4;
  box-sizing: border-box;
`;

/* ---------- sheet tabs ---------- */

const SheetTabs = styled.div`
  height: 21px;
  box-sizing: border-box;
  border-bottom: 1px solid #d0d0d0;
  display: flex;
  align-items: stretch;
  font-size: 9px;
  background: #e6e6e6;
`;

const TabNav = styled.div`
  width: 75px;
  flex: none;
  display: flex;
  align-items: center;
  padding-left: 19px;
  box-sizing: border-box;
  gap: 18px;
`;

const NavArrow = styled.i`
  width: 0;
  height: 0;
  border-top: ${(p) => (p.$small ? 4 : 3)}px solid transparent;
  border-bottom: ${(p) => (p.$small ? 4 : 3)}px solid transparent;
  ${(p) => (p.$left ? "border-right" : "border-left")}: 4px solid ${(p) => (p.$on ? (p.$small ? "#666" : "#1d6b41") : "#b5b5b5")};
`;

const Ellipsis = styled.span`
  color: #1d6b41;
  font-weight: 700;
  margin-left: -2px;
`;

const SheetTab = styled.div`
  width: ${(p) => p.$w}px;
  flex: none;
  box-sizing: border-box;
  margin: 1px 0 ${(p) => (p.$active ? 0 : 2)}px;
  display: flex;
  align-items: center;
  justify-content: center;
  white-space: nowrap;
  background: ${(p) => (p.$active ? "#fff" : "transparent")};
  color: ${(p) => (p.$active ? "#1d6b41" : "#444")};
  font-weight: ${(p) => (p.$active ? 700 : 400)};
  border-bottom: ${(p) => (p.$active ? `2px solid #1d6b41` : "none")};
  border-left: 1px solid #a9a9a9;
  letter-spacing: .15px;

  &:nth-child(6) { border-right: 1px solid #a9a9a9; }
`;

const AddSheet = styled.span`
  width: 13px;
  height: 13px;
  margin: 4px 0 0 24px;
  border: 1px solid #c2c2c2;
  border-radius: 50%;
  color: #c2c2c2;
  display: flex;
  align-items: center;
  justify-content: center;
  font-size: 11px;
  line-height: 1;
`;

const HScroll = styled.div`
  margin-left: 4px;
  width: 383px;
  height: 11px;
  margin-top: 6px;
  display: flex;
`;

const HButton = styled.div`
  width: 11px;
  flex: none;
  background: #fff;
  border: 1px solid #cfcfcf;
  box-sizing: border-box;
  display: flex;
  align-items: center;
  justify-content: center;
`;

const HThumb = styled.div`
  width: 334px;
  background: #fff;
  border: 1px solid #bdbdbd;
  box-sizing: border-box;
`;

const HRest = styled.div`
  flex: 1;
  background: #dcdcdc;
`;

/* ---------- status bar ---------- */

const StatusBar = styled.footer`
  height: 17px;
  background: #f3f3f3;
  display: flex;
  align-items: center;
  padding-left: 6px;
  font-size: 8.400px;
`;

const ViewButtons = styled.div`
  margin-left: auto;
  display: flex;
  height: 100%;
`;

const ViewButton = styled.div`
  width: 28.500px;
  display: flex;
  align-items: center;
  justify-content: center;
  background: ${(p) => (p.$on ? "#d2d2d2" : "transparent")};
`;

const ZoomSign = styled.span`
  font-size: 11px;
  width: 14px;
  text-align: center;
  color: #555;
`;

const ZoomTrack = styled.div`
  position: relative;
  width: 72px;
  height: 1px;
  background: #aaa;

  i {
    position: absolute;
    left: 35px;
    top: -4px;
    width: 4px;
    height: 9px;
    background: #777;
  }
`;

const ZoomValue = styled.span`
  width: 30px;
  padding-right: 5px;
  margin-left: 3px;
  text-align: right;
  box-sizing: border-box;
`;

/* ---------- taskbar ---------- */

const Taskbar = styled.div`
  flex: 1;
  background: #1f2428;
  display: flex;
  align-items: stretch;
`;

const StartButton = styled.div`
  width: 36px;
  display: flex;
  align-items: center;
  justify-content: center;
`;

const SearchBox = styled.div`
  width: 257px;
  background: #f2f2f2;
  display: flex;
  align-items: center;
  padding: 0 10px 0 8px;
  box-sizing: border-box;
`;

const Cortana = styled.i`
  width: 14px;
  height: 14px;
  border: 2.500px solid #111;
  border-radius: 50%;
  box-sizing: border-box;
`;

const SearchText = styled.span`
  flex: 1;
  margin-left: 8px;
  font-size: 10.500px;
  color: #444;
`;

const TaskApp = styled.div`
  width: ${(p) => p.$w}px;
  flex: none;
  box-sizing: border-box;
  display: flex;
  align-items: center;
  justify-content: center;
  border-bottom: 2px solid ${(p) => (p.$open ? "#6cb0e4" : "transparent")};
  border-left: 2px solid transparent;
  border-right: 2px solid transparent;
`;

const WhiteTile = styled.div`
  position: relative;
  width: 18px;
  height: 18px;
  background: #fff;
  border-radius: ${(p) => (p.$round ? 3 : 0)}px;
  display: flex;
  align-items: center;
  justify-content: center;
`;

const AmazonA = styled.span`
  font-family: "Liberation Sans", sans-serif;
  font-weight: 700;
  font-size: 13px;
  color: #111;
  margin-top: -3px;
`;

const AmazonSmile = styled.i`
  position: absolute;
  left: 3px;
  right: 3px;
  bottom: 2px;
  height: 3px;
  border-bottom: 1.500px solid #f09a1a;
  border-radius: 0 0 8px 8px;
`;

const ExcelApp = styled(TaskApp)`
  position: relative;
  width: 36px;
  background: #4c5054;
  border-bottom-color: #6cb0e4;
  border-left: none;
  border-right: none;
`;

const ExcelX = styled.span`
  position: absolute;
  left: 11px;
  top: 7px;
  font-family: "Liberation Sans", sans-serif;
  font-weight: 700;
  font-size: 11px;
  color: #fff;
`;

const Tray = styled.div`
  flex: 1;
  display: flex;
  align-items: center;
  padding-left: 161px;
  color: #fff;
`;

const HelpBadge = styled.div`
  position: relative;
  width: 17px;
  height: 17px;
  border-radius: 50%;
  background: #fff;
  box-shadow: inset 0 0 0 2px #1b86d6;
  color: #1b86d6;
  font-family: "Liberation Sans", sans-serif;
  font-size: 13px;
  font-weight: 700;
  text-align: center;
  line-height: 17px;

  i {
    position: absolute;
    right: -3px;
    bottom: -1px;
    width: 8px;
    height: 8px;
    border-radius: 50%;
    background: #f39c12;
  }
`;

const PeopleBtn = styled.div`
  margin-left: 16px;
  width: 26px;
  display: flex;
  justify-content: flex-start;
`;

const TrayIcon = styled.div`
  width: ${(p) => p.$w}px;
  flex: none;
  display: flex;
  justify-content: center;
`;

const Clock = styled.div`
  width: 58px;
  margin-left: 4px;
  display: flex;
  flex-direction: column;
  align-items: center;
  font-size: 8.800px;
  line-height: 13px;
  color: #e8e8e8;
`;

const Notify = styled.div`
  position: relative;
  margin-left: 8px;
  display: flex;
`;

const NotifyCount = styled.span`
  position: absolute;
  right: -6px;
  bottom: -7px;
  width: 13px;
  height: 13px;
  box-sizing: border-box;
  border: 1px solid #ccc;
  border-radius: 50%;
  background: #1f2428;
  font-size: 8px;
  font-weight: 700;
  line-height: 11px;
  text-align: center;
`;
